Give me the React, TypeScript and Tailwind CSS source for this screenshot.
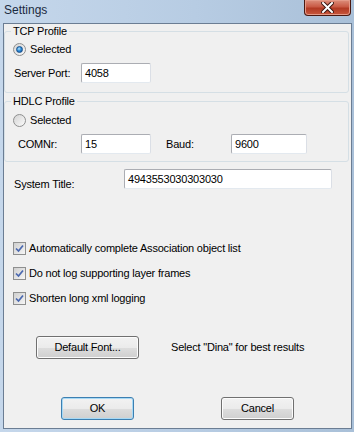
import React from 'react';

const font = { fontFamily: '"Liberation Sans", Arial, sans-serif' };

const Radio = ({ checked }: { checked?: boolean }) => (
  <span className="relative w-[13px] h-[13px] rounded-full border border-[#8e8f8f] bg-gradient-to-br from-[#d4d4d4] to-[#fbfbfb] flex items-center justify-center shrink-0">
    {checked && (
      <span className="w-[7px] h-[7px] rounded-full bg-[radial-gradient(circle_at_40%_35%,#b8e4ff_0%,#2f8fd8_45%,#0b4f9e_100%)] border border-[#174f8c]" />
    )}
  </span>
);

const Checkbox = () => (
  <span className="w-[13px] h-[13px] border border-[#8e8f8f] bg-gradient-to-br from-[#cfcfcf] to-[#f6f6f6] flex items-center justify-center shrink-0">
    <svg width="9" height="9" viewBox="0 0 9 9">
      <path d="M1 4.5 L3.5 7 L8 1.5" fill="none" stroke="#4a68b0" strokeWidth="1.7" />
    </svg>
  </span>
);

const TextBox = ({ value, w }: { value: string; w: string }) => (
  <div className={`${w} h-[20px] bg-white border border-[#abadb3] border-b-[#e3e9ef] border-r-[#dbdfe6] rounded-[2px] pl-[3px] flex items-center text-[11px] text-black`}>
    {value}
  </div>
);

const Button = ({ label, w, isDefault }: { label: string; w: string; isDefault?: boolean }) => (
  <div
    className={`${w} h-[23px] rounded-[3px] border ${
      isDefault ? 'border-[#3c7fb1] shadow-[inset_0_0_0_1px_#a7d9f5]' : 'border-[#707070] shadow-[inset_0_0_0_1px_#fcfcfc]'
    } bg-[linear-gradient(#f2f2f2_0%,#ebebeb_50%,#dddddd_51%,#cfcfcf_100%)] flex items-center justify-center text-[11px] text-black`}
  >
    {label}
  </div>
);

const GroupBox = ({ title, children, className }: { title: string; children: React.ReactNode; className?: string }) => (
  <div className={`relative border border-[#d5dfe5] rounded-[3px] mr-[2px] ${className ?? ''}`}>
    <span className="absolute -top-[8px] left-[6px] bg-[#f0f0f0] px-[2px] leading-[14px] text-[11px] text-black">{title}</span>
    {children}
  </div>
);

export default function App() {
  return (
    <div
      className="w-[354px] h-[432px] flex flex-col bg-[linear-gradient(90deg,#c5d7eb_0%,#b7cce3_55%,#a9c0d8_100%)] overflow-hidden tracking-[-0.2px]"
      style={font}
    >
      {/* Title bar */}
      <div className="h-[23px] flex justify-between items-start shrink-0">
        <span className="pl-[4px] pt-[2px] text-[12px] text-[#1b2a3e] leading-[16px] tracking-normal">Settings</span>
        <div className="mr-[3px] w-[47px] h-[16px] rounded-b-[4px] border border-t-0 border-[#4a1810] bg-[linear-gradient(#dc8f7c_0%,#c95a45_45%,#b23a24_55%,#c8573c_100%)] shadow-[inset_0_0_0_1px_#e49a88] flex items-center justify-center">
          <svg width="13" height="11" viewBox="0 0 13 11">
            <path d="M2 1 L11 10 M11 1 L2 10" stroke="#3b1510" strokeWidth="4" strokeLinecap="square" />
            <path d="M2 1 L11 10 M11 1 L2 10" stroke="#ffffff" strokeWidth="2" strokeLinecap="square" />
          </svg>
        </div>
      </div>

      {/* Client area */}
      <div className="flex-1 ml-[3px] mr-[2px] mb-[3px] border border-[#6b7d93] bg-[#f0f0f0] flex flex-col text-[11px] text-black">
        <GroupBox title="TCP Profile" className="mt-[7px]">
          <div className="pl-[8px] pt-[11px] pb-[9px] flex flex-col gap-[7px]">
            <div className="h-[13px] flex items-center gap-[4px]">
              <Radio checked />
              <span>Selected</span>
            </div>
            <div className="flex items-center">
              <span className="w-[68px] pl-[1px]">Server Port:</span>
              <TextBox value="4058" w="w-[70px]" />
            </div>
          </div>
        </GroupBox>

        <GroupBox title="HDLC Profile" className="mt-[8px]">
          <div className="pl-[8px] pt-[12px] pb-[7px] flex flex-col gap-[7px]">
            <div className="h-[13px] flex items-center gap-[4px]">
              <Radio />
              <span>Selected</span>
            </div>
            <div className="flex items-center">
              <span className="w-[68px] pl-[5px]">COMNr:</span>
              <TextBox value="15" w="w-[70px]" />
              <span className="w-[80px] pl-[15px]">Baud:</span>
              <TextBox value="9600" w="w-[76px]" />
            </div>
          </div>
        </GroupBox>

        <div className="mt-[7px] pl-[10px] flex items-start">
          <span className="w-[110px] mt-[9px] leading-[13px]">System Title:</span>
          <TextBox value="4943553030303030" w="w-[208px]" />
        </div>

        <div className="mt-[51px] pl-[9px] flex flex-col gap-[12px]">
          {[
            'Automatically complete Association object list',
            'Do not log supporting layer frames',
            'Shorten long xml logging',
          ].map(label => (
            <div key={label} className="h-[13px] flex items-center gap-[3px]">
              <Checkbox />
              <span>{label}</span>
            </div>
          ))}
        </div>

        <div className="mt-[31px] pl-[32px] flex items-center">
          <Button label="Default Font..." w="w-[103px]" />
          <span className="ml-[32px]">Select "Dina" for best results</span>
        </div>

        <div className="mt-[38px] pl-[57px] flex items-center gap-[87px]">
          <Button label="OK" w="w-[73px]" isDefault />
          <Button label="Cancel" w="w-[73px]" />
        </div>
      </div>
    </div>
  );
}
